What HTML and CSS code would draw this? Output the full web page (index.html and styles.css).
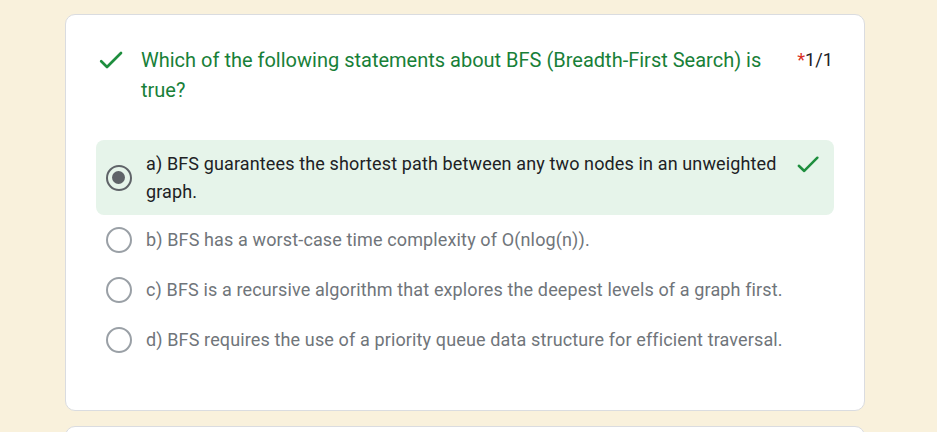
FILE: index.html
```html
<!DOCTYPE html>
<html lang="en">
<head>
<meta charset="utf-8">
<title>Quiz result</title>
<link rel="stylesheet" href="styles.css">
</head>
<body>
<main class="page">
  <section class="card">
    <div class="q-head">
      <svg class="q-check" viewBox="0 0 30 30" width="30" height="30"><path d="M5.2 16.3L11 22L25 8" fill="none" stroke="currentColor" stroke-width="2.7" stroke-linecap="round" stroke-linejoin="round"/></svg>
      <div class="q-title">Which of the following statements about BFS (Breadth-First Search) is true?</div>
      <div class="q-score"><span class="req">*</span>1/1</div>
    </div>
    <ul class="options">
      <li class="opt opt-correct">
        <span class="radio radio-on"></span>
        <span class="opt-text">a) BFS guarantees the shortest path between any two nodes in an unweighted graph.</span>
        <svg class="opt-check" viewBox="0 0 30 30" width="29" height="29"><path d="M5 16.3L10.6 21.7L24.2 8" fill="none" stroke="currentColor" stroke-width="2.6" stroke-linecap="round" stroke-linejoin="round"/></svg>
      </li>
      <li class="opt">
        <span class="radio"></span>
        <span class="opt-text">b) BFS has a worst-case time complexity of O(nlog(n)).</span>
      </li>
      <li class="opt">
        <span class="radio"></span>
        <span class="opt-text">c) BFS is a recursive algorithm that explores the deepest levels of a graph first.</span>
      </li>
      <li class="opt">
        <span class="radio"></span>
        <span class="opt-text">d) BFS requires the use of a priority queue data structure for efficient traversal.</span>
      </li>
    </ul>
  </section>
  <section class="card card-next"></section>
</main>
</body>
</html>
```

FILE: styles.css
```css
* { box-sizing: border-box; }
html, body { margin: 0; padding: 0; height: 100%; overflow: hidden; }
body {
  background: #f9f1dc;
  font-family: Roboto, "Noto Sans", Arial, sans-serif;
  color: #202124;
}
.page {
  height: 100%;
  overflow: hidden;
  padding: 14px 0 0 65px;
  display: flex;
  flex-direction: column;
  gap: 15px;
}
.card {
  flex: none;
  width: 800px;
  background: #fff;
  border: 1px solid #dadce0;
  border-radius: 10px;
  padding: 30px 30px 45px 30px;
}
.card-next { height: 60px; padding: 0; }
.q-head {
  display: flex;
  align-items: flex-start;
}
.q-check {
  color: #1e8e3e;
  flex: none;
  margin-left: 0;
  margin-top: 0;
  margin-right: 15px;
}
.q-title {
  flex: 1;
  font-size: 20px;
  line-height: 30px;
  color: #188038;
  padding-right: 30px;
}
.q-score {
  flex: none;
  font-size: 18.2px;
  line-height: 30px;
  color: #202124;
  padding-right: 1px;
}
.req { color: #d93025; }
.options {
  list-style: none;
  margin: 35px 0 0 0;
  padding: 0;
}
.opt {
  display: flex;
  align-items: center;
  padding: 11px 10px;
  border-radius: 8px;
}
.opt-correct {
  background: #e6f4ea;
  padding-top: 10px;
  padding-bottom: 9px;
}
.radio {
  flex: none;
  width: 26px;
  height: 26px;
  border: 2.5px solid #9aa0a6;
  border-radius: 50%;
  margin-right: 14px;
  position: relative;
}
.radio-on { border-color: #5f6368; }
.radio-on::after {
  content: "";
  position: absolute;
  left: 4px; top: 4px;
  width: 13px; height: 13px;
  border-radius: 50%;
  background: #5f6368;
}
.opt-text {
  flex: 1;
  font-size: 18px;
  letter-spacing: 0.13px;
  line-height: 28px;
  color: #70757a;
}
.opt-correct .opt-text { color: #202124; padding-right: 10px; }
.opt-check {
  flex: none;
  color: #1e8e3e;
  align-self: flex-start;
  margin-top: 0;
  margin-right: 1px;
}
```
